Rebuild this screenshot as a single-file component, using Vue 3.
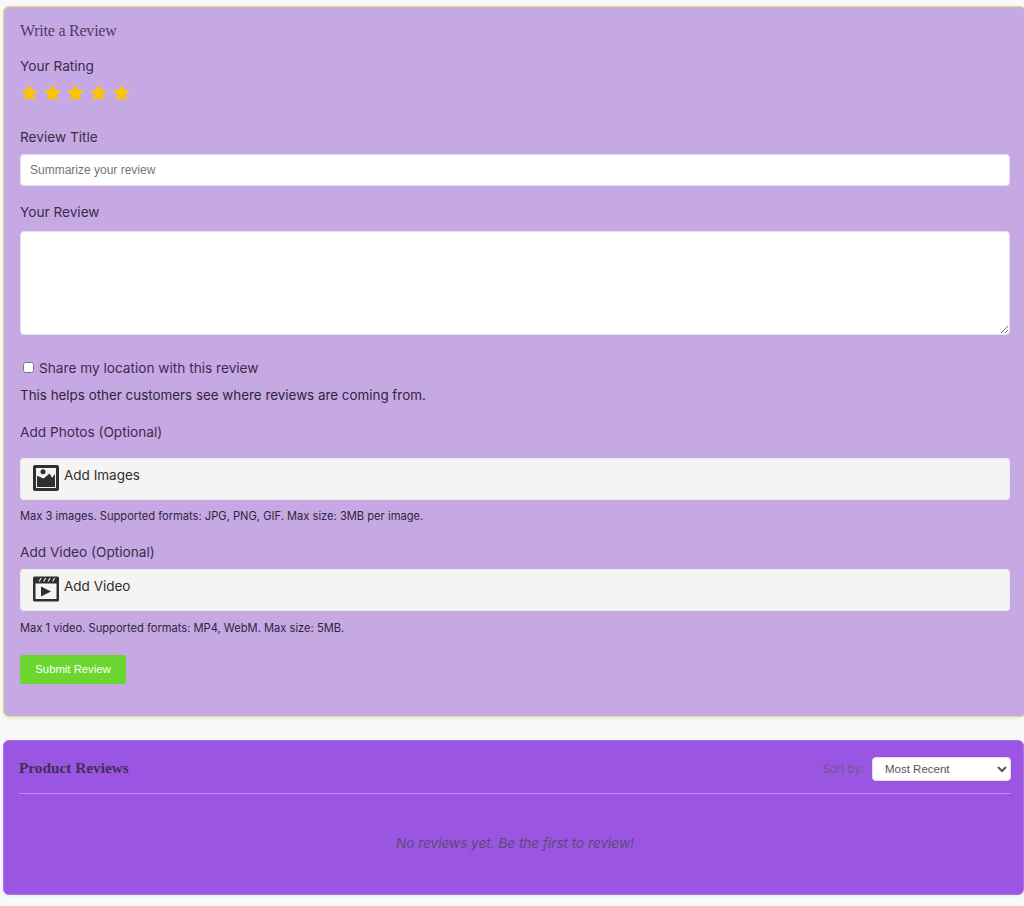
<script setup>
const stars = [1, 2, 3, 4, 5]
</script>

<template>
  <div class="page">
    <section class="card form-card">
      <h3 class="form-title">Write a Review</h3>
      <div class="label rating-label">Your Rating</div>
      <div class="stars">
        <svg v-for="s in stars" :key="s" class="star" viewBox="0 0 24 24" aria-hidden="true">
          <path d="M12 1.6l3.2 7.1 7.6.8-5.7 5.2 1.6 7.7L12 18.5l-6.7 3.9 1.6-7.7-5.7-5.2 7.6-.8z" />
        </svg>
      </div>
      <label class="label title-label" for="rt">Review Title</label>
      <input id="rt" class="field" type="text" placeholder="Summarize your review" />
      <label class="label review-label" for="rb">Your Review</label>
      <textarea id="rb" class="area"></textarea>
      <label class="check-row">
        <input class="check" type="checkbox" />
        <span>Share my location with this review</span>
      </label>
      <p class="help">This helps other customers see where reviews are coming from.</p>
      <div class="label photos-label">Add Photos (Optional)</div>
      <div class="upload photos-upload">
        <svg class="icon" viewBox="0 0 26 26" aria-hidden="true">
          <rect x="0" y="0" width="26" height="26" rx="2" fill="#2f2f2f" />
          <rect x="3" y="3" width="20" height="20" fill="#f4f4f4" />
          <circle cx="10" cy="6.8" r="2.5" fill="#2f2f2f" />
          <path d="M4 22V10.8l6.6 2.6 6-4.8 2.4 4.2 3-3.8V22z" fill="#2f2f2f" />
        </svg>
        <span>Add Images</span>
      </div>
      <p class="hint">Max 3 images. Supported formats: JPG, PNG, GIF. Max size: 3MB per image.</p>
      <div class="label video-label">Add Video (Optional)</div>
      <div class="upload video-upload">
        <svg class="icon" viewBox="0 0 26 25" aria-hidden="true">
          <rect x="0" y="0" width="26" height="25" rx="1.5" fill="#2f2f2f" />
          <rect x="2.5" y="7" width="21" height="15.5" fill="#f4f4f4" />
          <path d="M5.5 5l2-3.4h1.2L6.7 5zM10 5l2-3.4h1.2L11.2 5zM14.5 5l2-3.4h1.2L15.7 5zM19 5l2-3.4h1.2L20.2 5z" fill="#f4f4f4" />
          <path d="M8 10l10 5-10 5z" fill="#2f2f2f" />
        </svg>
        <span>Add Video</span>
      </div>
      <p class="hint second-hint">Max 1 video. Supported formats: MP4, WebM. Max size: 5MB.</p>
      <button class="submit" type="button">Submit Review</button>
    </section>

    <section class="card list-card">
      <header class="list-head">
        <h3 class="list-title">Product Reviews</h3>
        <div class="sort">
          <span>Sort by:</span>
          <select class="sort-select">
            <option>Most Recent</option>
          </select>
        </div>
      </header>
      <p class="empty">No reviews yet. Be the first to review!</p>
    </section>
  </div>
</template>

<style>
html, body { margin: 0; background: #f9f9f9; overflow: hidden; }
</style>

<style scoped>
.page {
  height: 906px;
  box-sizing: border-box;
  padding: 6px 0 0 3px;
  background: #f9f9f9;
  font-family: Inter, "Liberation Sans", sans-serif;
  color: #3a2d4c;
  overflow: hidden;
}
.card {
  box-sizing: border-box;
  border-radius: 6px;
  box-shadow: 0 1px 4px rgba(0, 0, 0, 0.08);
}
.form-card {
  width: 1023px;
  height: 711px;
  background: #c6a9e3;
  border: 1px solid #e6dc78;
  padding: 15px 15px 0 16px;
}
.form-title {
  margin: 0;
  height: 18px;
  font: 400 16px/18px "Liberation Serif", serif;
  letter-spacing: -0.23px;
  color: #4a3c5e;
}
.label {
  display: block;
  font-size: 13.65px;
  line-height: 20px;
  font-weight: 400;
}
.rating-label { margin-top: 16px; }
.stars { display: flex; gap: 4px; margin-top: 7px; height: 20px; }
.star { width: 19px; height: 19px; fill: #fdc500; }
.title-label { margin-top: 24px; }
.field {
  display: block;
  box-sizing: border-box;
  width: 100%;
  height: 32px;
  margin-top: 7px;
  padding: 0 9px;
  border: 1px solid #e6e0ee;
  border-radius: 4px;
  background: #fff;
  font: 12px "Liberation Sans", sans-serif;
  outline: none;
}
.field::placeholder { color: #757575; opacity: 1; }
.review-label { margin-top: 16px; }
.area {
  display: block;
  box-sizing: border-box;
  width: 100%;
  height: 104px;
  margin-top: 9px;
  border: 1px solid #e6e0ee;
  border-radius: 4px;
  background: #fff;
  resize: vertical;
  outline: none;
}
.check-row {
  display: flex;
  align-items: center;
  height: 20px;
  margin-top: 23px;
  font-size: 13.65px;
  line-height: 20px;
}
.check { width: 11px; height: 11px; margin: 0 5px 2px 3px; }
.help { margin: 7px 0 0; font-size: 13.4px; line-height: 20px; color: #2f2440; }
.photos-label { margin-top: 17px; }
.upload {
  box-sizing: border-box;
  display: flex;
  align-items: flex-start;
  gap: 5px;
  height: 42px;
  padding: 6px 12px;
  border: 1px dashed #e6e6e6;
  border-radius: 4px;
  background: #f4f4f4;
  font-size: 13.5px;
  line-height: 20px;
  color: #2f2f2f;
}
.photos-upload { margin-top: 16px; }
.video-upload { margin-top: 7px; }
.icon { width: 26px; height: 26px; flex: none; }
.hint { margin: 9px 0 0; font-size: 11.15px; line-height: 14px; color: #2f2440; }
.second-hint { margin-top: 10px; }
.video-label { margin-top: 19px; }
.submit {
  display: block;
  width: 106px;
  height: 29px;
  margin-top: 20px;
  padding: 0;
  border: 0;
  border-radius: 3px;
  background: #6bd62f;
  color: #fff;
  font: 11.3px/29px "Liberation Sans", sans-serif;
}
.list-card {
  width: 1021px;
  height: 155px;
  margin-top: 23px;
  background: #9b55e3;
  border: 1px solid #ab72e6;
  padding: 0 12px 0 15px;
}
.list-head {
  display: flex;
  align-items: center;
  justify-content: space-between;
  height: 52px;
  border-bottom: 1px solid #bd8fea;
}
.list-title {
  margin: 2px 0 0;
  font: 700 15.3px/20px "Liberation Serif", serif;
  color: #3e2f55;
}
.sort { display: flex; align-items: center; gap: 8px; margin-top: 3px; font-size: 11.2px; color: #6d5a8a; }
.sort-select {
  width: 139px;
  height: 24px;
  padding: 0 8px;
  border: 1px solid #e6e0ee;
  border-radius: 4px;
  background: #fff;
  color: #555;
  font: 11.5px "Liberation Sans", sans-serif;
}
.empty {
  margin: 39px 0 0;
  text-align: center;
  font-size: 13.55px;
  line-height: 20px;
  font-style: italic;
  color: #5a4a72;
}
</style>
